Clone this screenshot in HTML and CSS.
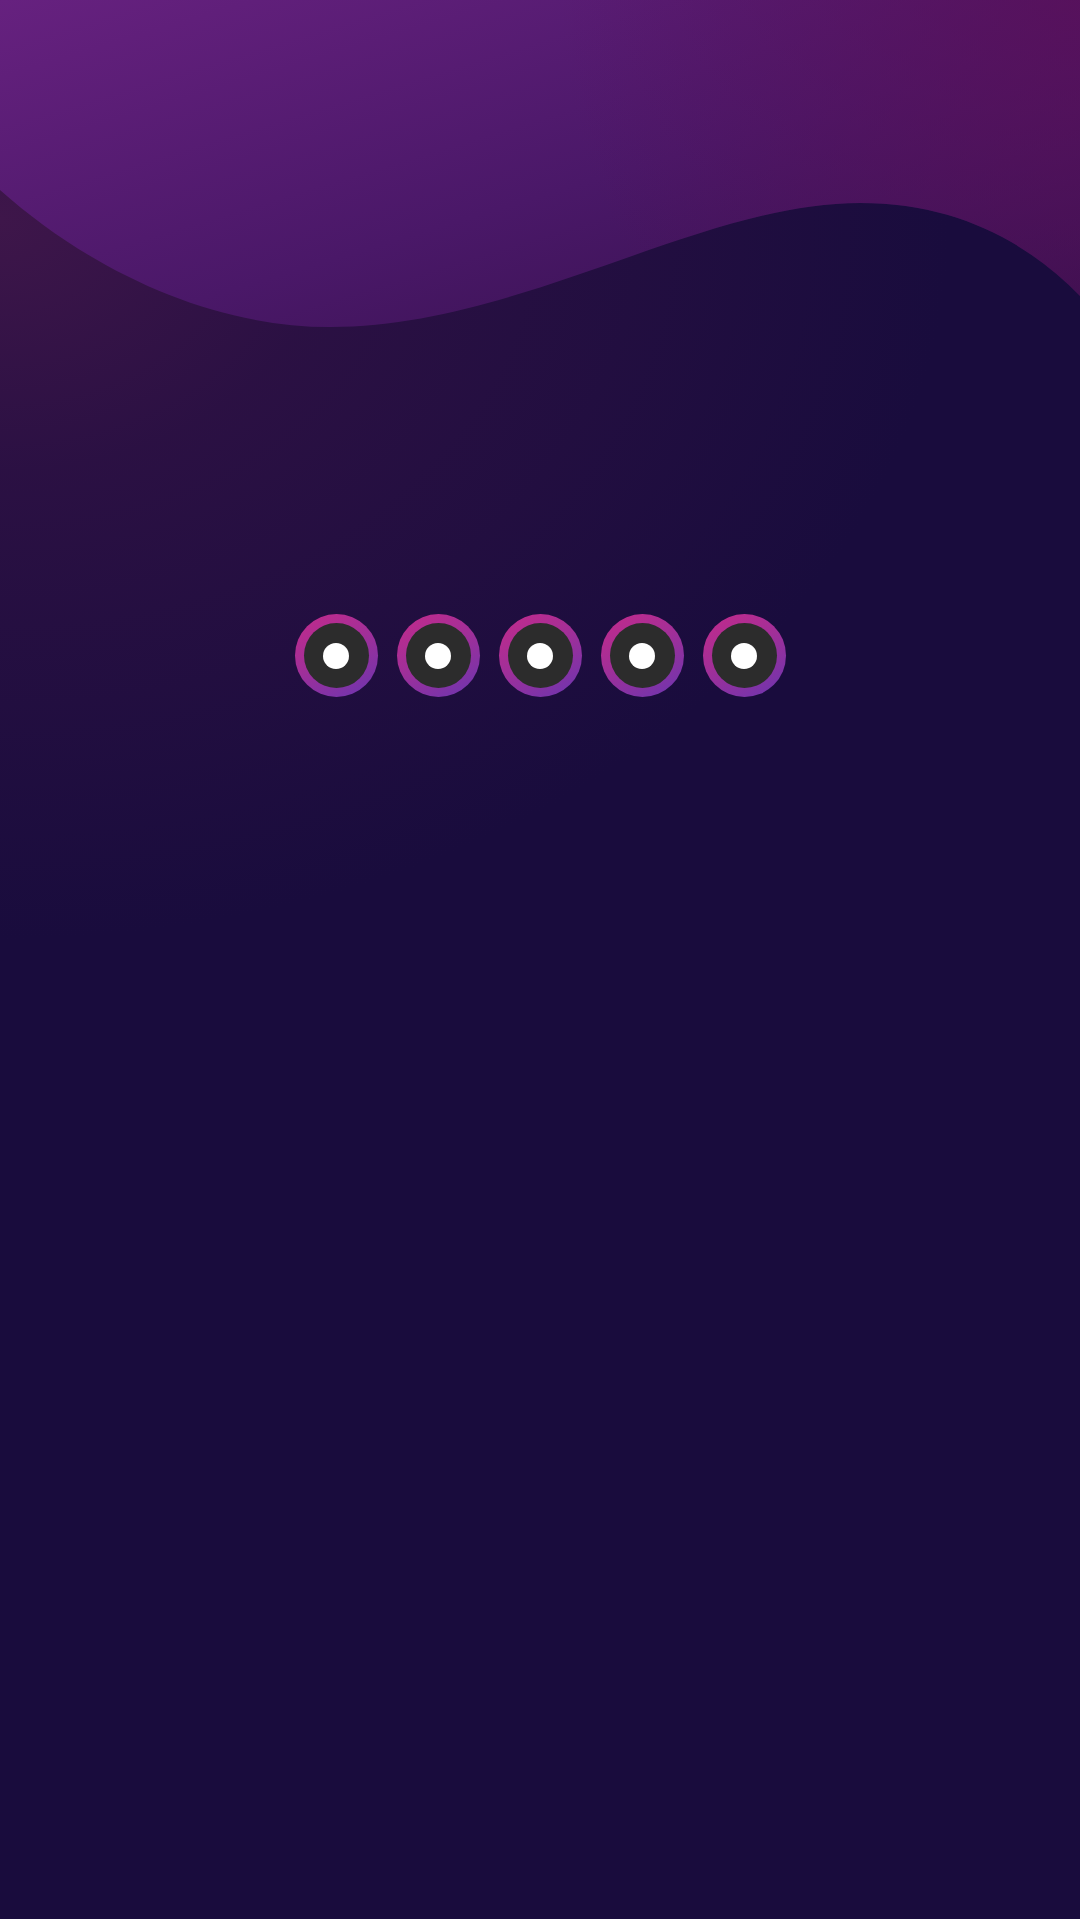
FILE: index.html
```html
<!DOCTYPE html>
<html lang="en">
<head>
<meta charset="utf-8">
<title>Loading</title>
<link rel="stylesheet" href="styles.css">
</head>
<body>
<div class="screen">
  <svg class="wave" width="1080" height="340" viewBox="0 0 1080 340" aria-hidden="true">
    <defs>
      <linearGradient id="waveFill" x1="0" y1="0" x2="1" y2="1">
        <stop offset="0" stop-color="#66217f"/>
        <stop offset="0.55" stop-color="#4a1868"/>
        <stop offset="1" stop-color="#34104c"/>
      </linearGradient>
      <radialGradient id="waveTint" cx="1080" cy="0" r="520" gradientUnits="userSpaceOnUse">
        <stop offset="0" stop-color="#5a0f58" stop-opacity="0.75"/>
        <stop offset="1" stop-color="#5a0f58" stop-opacity="0"/>
      </radialGradient>
    </defs>
    <path d="M0,0 H1080 V296 C1030,245 960,203 860,203 C700,203 520,327 330,327 C210,327 90,270 0,190 Z" fill="url(#waveFill)"/>
    <path d="M0,0 H1080 V296 C1030,245 960,203 860,203 C700,203 520,327 330,327 C210,327 90,270 0,190 Z" fill="url(#waveTint)"/>
  </svg>
  <main class="content">
    <div class="loader">
      <div class="ring"><div class="core"><div class="dot"></div></div></div>
      <div class="ring"><div class="core"><div class="dot"></div></div></div>
      <div class="ring"><div class="core"><div class="dot"></div></div></div>
      <div class="ring"><div class="core"><div class="dot"></div></div></div>
      <div class="ring"><div class="core"><div class="dot"></div></div></div>
    </div>
  </main>
</div>
</body>
</html>
```
FILE: styles.css
```css
html, body {
  margin: 0;
  padding: 0;
  background: #190c3d;
  font-family: "Noto Sans", sans-serif;
}

.screen {
  position: relative;
  width: 1080px;
  height: 1919px;
  overflow: hidden;
  background:
    radial-gradient(ellipse 950px 720px at 0px 220px, rgba(62, 22, 74, 1) 0%, rgba(46, 17, 68, 0.85) 35%, rgba(25, 12, 61, 0) 100%),
    #190c3d;
}

.wave {
  position: absolute;
  top: 0;
  left: 0;
  display: block;
}

.content {
  position: relative;
  display: flex;
  justify-content: center;
  padding-top: 614px;
}

.loader {
  display: flex;
  gap: 19px;
}

.ring {
  width: 83px;
  height: 83px;
  border-radius: 50%;
  background: linear-gradient(150deg, #c42a8a 0%, #a22f98 45%, #6a35b0 100%);
  display: flex;
  align-items: center;
  justify-content: center;
}

.core {
  width: 65px;
  height: 65px;
  border-radius: 50%;
  background: #2c2c2c;
  display: flex;
  align-items: center;
  justify-content: center;
}

.dot {
  width: 26px;
  height: 26px;
  border-radius: 50%;
  background: #ffffff;
}
```
